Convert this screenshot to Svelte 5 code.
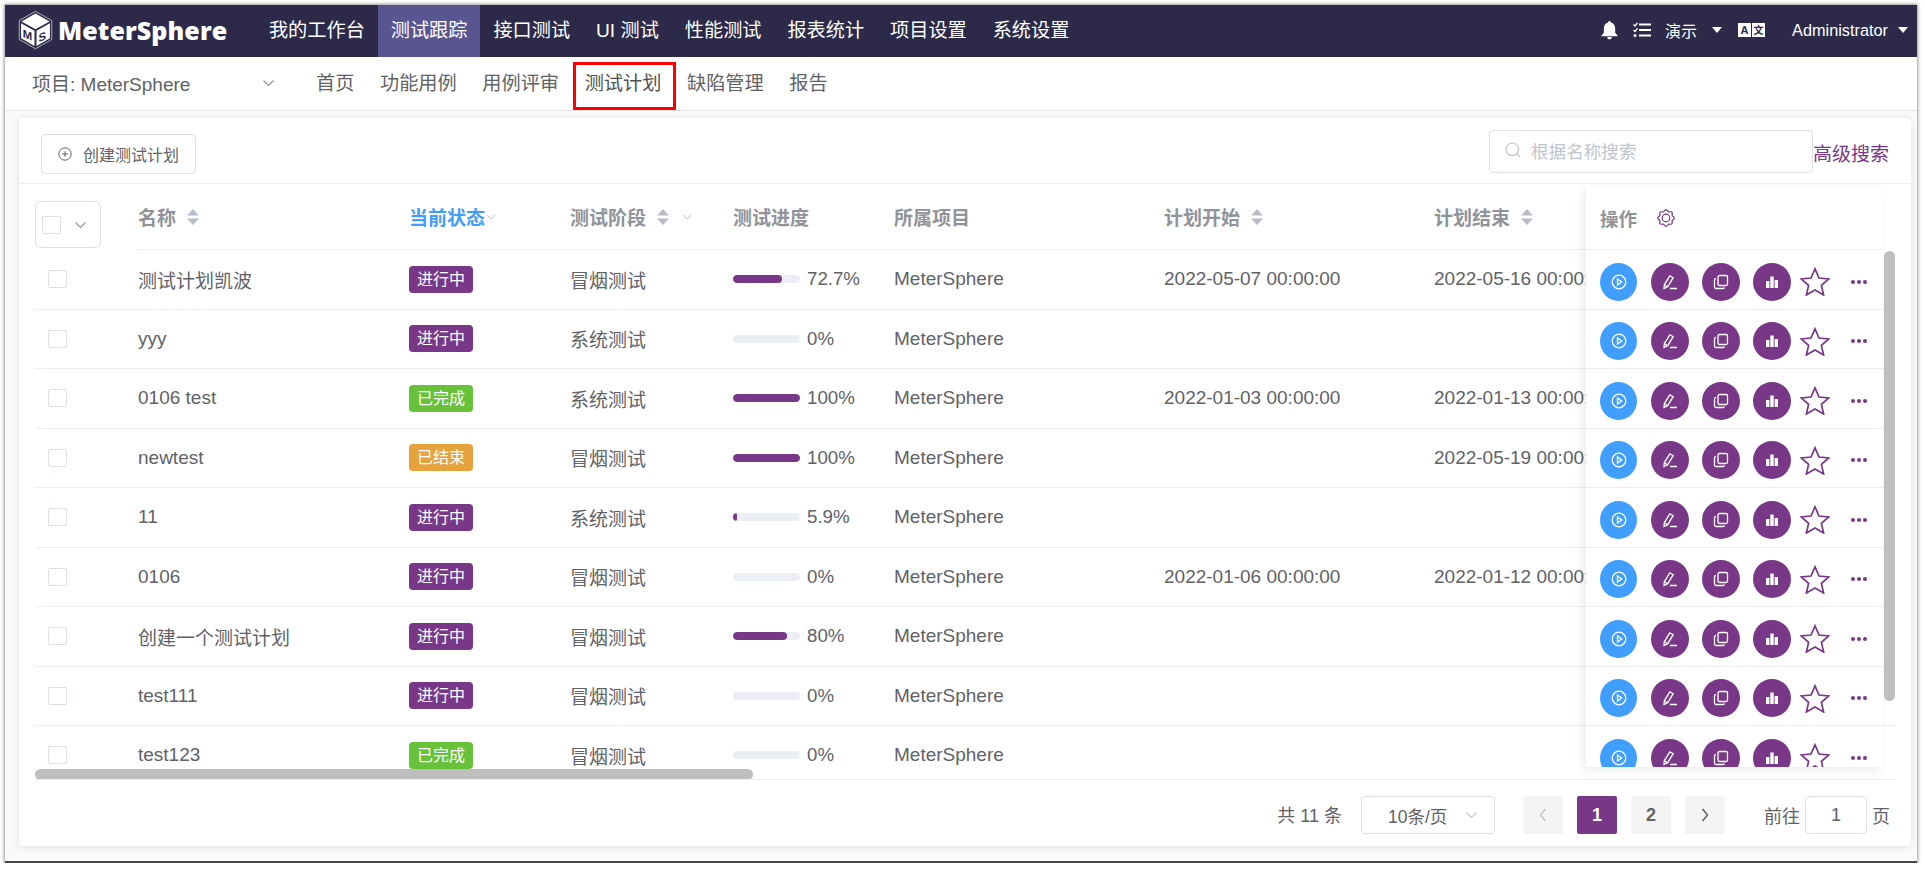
<script lang="ts">
	interface Plan {
		name: string;
		status: string;
		phase: string;
		progress: number;
		start?: string;
		end?: string;
	}

	const topNav = ['我的工作台', '测试跟踪', '接口测试', 'UI 测试', '性能测试', '报表统计', '项目设置', '系统设置'];
	const subNav = ['首页', '功能用例', '用例评审', '测试计划', '缺陷管理', '报告'];

	const plans: Plan[] = [
		{ name: '测试计划凯波', status: '进行中', phase: '冒烟测试', progress: 72.7, start: '2022-05-07 00:00:00', end: '2022-05-16 00:00:00' },
		{ name: 'yyy', status: '进行中', phase: '系统测试', progress: 0 },
		{ name: '0106 test', status: '已完成', phase: '系统测试', progress: 100, start: '2022-01-03 00:00:00', end: '2022-01-13 00:00:00' },
		{ name: 'newtest', status: '已结束', phase: '冒烟测试', progress: 100, end: '2022-05-19 00:00:00' },
		{ name: '11', status: '进行中', phase: '系统测试', progress: 5.9 },
		{ name: '0106', status: '进行中', phase: '冒烟测试', progress: 0, start: '2022-01-06 00:00:00', end: '2022-01-12 00:00:00' },
		{ name: '创建一个测试计划', status: '进行中', phase: '冒烟测试', progress: 80 },
		{ name: 'test111', status: '进行中', phase: '冒烟测试', progress: 0 },
		{ name: 'test123', status: '已完成', phase: '冒烟测试', progress: 0 }
	];

	const statusClass: Record<string, string> = { 进行中: 'doing', 已完成: 'done', 已结束: 'ended' };

	// wavy eight-lobed gear outline
	const gearPath = Array.from({ length: 64 }, (_, i) => {
		const a = (i / 64) * Math.PI * 2;
		const r = 7.5 + 0.8 * Math.cos(8 * a);
		return `${i ? 'L' : 'M'}${(9 + r * Math.sin(a)).toFixed(2)} ${(9 - r * Math.cos(a)).toFixed(2)}`;
	}).join('') + 'Z';
</script>

{#snippet sort()}
	<svg class="sort" viewBox="0 0 14 16"><path d="M7 0l6 6.500H1zM7 16l-6-6.500h12z" /></svg>
{/snippet}

{#snippet chevron(cls)}
	<svg class={cls} viewBox="0 0 12 8"><path d="M1 1.500l5 5 5-5" /></svg>
{/snippet}

<div class="window">
	<header class="top">
		<div class="brand">
			<svg class="logo" viewBox="0 0 34 38">
				<path class="hex" d="M17 .8l15.800 9v18.400L17 37.200 1.200 28.200V9.800z" />
				<path d="M17 3l13.600 7.700L17 18.200 3.400 10.700z" fill="#fff" />
				<path d="M3 12.400l13 7.300v14.800L3 27z" fill="#fff" />
				<path d="M31 12.400l-13 7.300v14.800L31 27z" fill="#fff" />
				<text x="4.500" y="27" transform="skewY(22) translate(0 -3)">M</text>
				<text x="20" y="27" transform="skewY(-22) translate(0 12)">S</text>
			</svg>
			<span class="wordmark">MeterSphere</span>
		</div>
		<nav class="top-nav">
			{#each topNav as item}
				<a class:active={item === '测试跟踪'}>{item}</a>
			{/each}
		</nav>
		<div class="top-right">
			<svg class="bell" viewBox="0 0 18 20"><path d="M9 0a1.500 1.500 0 0 1 1.500 1.600C13.600 2.300 15 5 15 8v4.500l2.500 2.700v.8H.5v-.8L3 12.500V8c0-3 1.400-5.700 4.500-6.400A1.500 1.500 0 0 1 9 0zM6.500 17h5a2.500 2.500 0 0 1-5 0z" /></svg>
			<svg class="tasks" viewBox="0 0 18 16">
				<path d="M6 2.500h12M6 8h12M6 13.500h12" stroke-width="2.200" />
				<path d="M.5 2.500l1.500 1.500L4.500.8M.5 8l1.500 1.500L4.500 6.300" stroke-width="1.300" />
				<circle cx="2" cy="13.500" r="1.500" />
			</svg>
			<span class="demo">演示</span>
			<i class="caret"></i>
			<svg class="lang" viewBox="0 0 27 14">
				<rect width="13" height="14" fill="#fff" />
				<rect x="14" width="13" height="14" fill="#fff" />
				<text x="6.500" y="11" text-anchor="middle">A</text>
				<text x="20.500" y="11" text-anchor="middle" class="zh">文</text>
			</svg>
			<span class="admin">Administrator</span>
			<i class="caret"></i>
		</div>
	</header>

	<div class="sub">
		<div class="project">
			<span>项目: MeterSphere</span>
			{@render chevron('chev project-chev')}
		</div>
		<nav class="sub-nav">
			{#each subNav as item}
				<a class:boxed={item === '测试计划'}>{item}</a>
			{/each}
		</nav>
	</div>

	<main class="content">
		<section class="card">
			<div class="toolbar">
				<button class="create">
					<svg viewBox="0 0 14 14"><circle cx="7" cy="7" r="6.200" /><path d="M7 4.200v5.600M4.200 7h5.600" /></svg>
					创建测试计划
				</button>
				<div class="search-wrap">
					<div class="search">
						<svg viewBox="0 0 16 16"><circle cx="7.300" cy="7.300" r="6.300" /><path d="M12 12l3 3" /></svg>
						<span>根据名称搜索</span>
					</div>
					<a class="advanced">高级搜索</a>
				</div>
			</div>

			<div class="table">
				<div class="row head">
					<div class="cell select-head">
						<div class="select-box">
							<i class="check"></i>
							{@render chevron('chev')}
						</div>
					</div>
					<div class="cell">名称 {@render sort()}</div>
					<div class="cell blue">当前状态{@render chevron('chev tight')}</div>
					<div class="cell">测试阶段 {@render sort()} {@render chevron('chev spaced')}</div>
					<div class="cell">测试进度</div>
					<div class="cell">所属项目</div>
					<div class="cell">计划开始 {@render sort()}</div>
					<div class="cell">计划结束 {@render sort()}</div>
				</div>
				{#each plans as plan}
					<div class="row">
						<div class="cell"><i class="check row-check"></i></div>
						<div class="cell">{plan.name}</div>
						<div class="cell"><span class="tag {statusClass[plan.status]}">{plan.status}</span></div>
						<div class="cell">{plan.phase}</div>
						<div class="cell">
							<div class="bar"><div class="fill" style="width:{plan.progress}%"></div></div>
							<span class="pct">{plan.progress}%</span>
						</div>
						<div class="cell">MeterSphere</div>
						<div class="cell">{plan.start ?? ''}</div>
						<div class="cell">{plan.end ?? ''}</div>
					</div>
				{/each}

				<div class="fixed">
					<div class="fixed-head">
						<span>操作</span>
						<svg class="gear" viewBox="0 0 18 18">
							<path d={gearPath} />
							<circle cx="9" cy="9" r="3.800" />
						</svg>
					</div>
					{#each plans as plan}
						<div class="actions">
							<span class="round run">
								<svg viewBox="0 0 16 16"><circle cx="8" cy="8" r="6.800" /><path d="M6.500 5l4.200 3-4.200 3z" /></svg>
							</span>
							<span class="round">
								<svg viewBox="0 0 16 16"><path d="M2 14.500l.3-3.700L7.800 1.800l3.400 1.900-5.500 9zM2.300 10.800l3.400 1.900M8 14.500h7" /></svg>
							</span>
							<span class="round">
								<svg viewBox="0 0 16 16"><rect x="5" y="1.500" width="9.500" height="10" rx="1.500" /><path d="M3 4.500h-.2A1.500 1.500 0 0 0 1.500 6v7a1.500 1.500 0 0 0 1.500 1.500h7A1.500 1.500 0 0 0 11.500 13.500" /></svg>
							</span>
							<span class="round">
								<svg viewBox="0 0 16 16" class="solid"><rect x="2" y="7" width="3.400" height="7" /><rect x="6.300" y="2.500" width="3.400" height="11.500" /><rect x="10.600" y="6" width="3.400" height="8" /></svg>
							</span>
							<svg class="star" viewBox="0 0 30 29"><path d="M15 1.800l4 9.200 9.800.9-7.400 6.500 2.200 9.600L15 23l-8.600 5 2.200-9.600L1.200 11.900l9.800-.9z" /></svg>
							<span class="dots"><i></i><i></i><i></i></span>
						</div>
					{/each}
				</div>
				<div class="scroll-x"></div>
				<div class="scroll-y"></div>
			</div>

			<footer class="pager">
				<span class="total">共 11 条</span>
				<div class="size">10条/页 {@render chevron('chev size-chev')}</div>
				<div class="pages">
					<span class="page off"><svg viewBox="0 0 8 14"><path d="M6.500 1L1.500 7l5 6" /></svg></span>
					<span class="page current">1</span>
					<span class="page">2</span>
					<span class="page"><svg viewBox="0 0 8 14"><path d="M1.500 1l5 6-5 6" /></svg></span>
				</div>
				<div class="jump">前往 <span class="jump-input">1</span> 页</div>
			</footer>
		</section>
	</main>
</div>

<style>
	:global(body) {
		margin: 0;
		background: #fff;
		font-family: 'Liberation Sans', 'Noto Sans CJK SC', sans-serif;
		color: #606266;
	}

	.window {
		box-sizing: border-box;
		width: 1912px;
		height: 858px;
		margin: 5px 0 0 5px;
		display: flex;
		flex-direction: column;
		background: #fafafa;
		border-bottom: 2px solid #454545;
		box-shadow: 0 0 3px 1px #999;
	}

	/* top bar */
	.top {
		height: 52px;
		flex: none;
		display: flex;
		align-items: stretch;
		background: #2c2a48;
		color: #fff;
	}

	.brand {
		width: 251px;
		display: flex;
		align-items: center;
		padding-left: 13px;
		padding-bottom: 3px;
		box-sizing: border-box;
		flex: none;
	}

	.logo {
		width: 35px;
		height: 40px;
		flex: none;
	}

	.logo .hex {
		fill: none;
		stroke: #fff;
		stroke-width: 0.6;
	}

	.logo text {
		font: 900 11px 'Liberation Sans', sans-serif;
		fill: #2c2a48;
	}

	.wordmark {
		margin-left: 5px;
		font: 800 25px 'Open Sans', sans-serif;
		letter-spacing: 0.1px;
		white-space: nowrap;
	}

	.top-nav {
		display: flex;
		flex: 1;
		align-items: stretch;
	}

	.top-nav a {
		display: flex;
		align-items: center;
		padding: 0 12.950px 4px;
		font-size: 19.200px;
		white-space: nowrap;
		color: #fff;
	}

	.top-nav a.active {
		background: #595591;
	}

	.top-right {
		display: flex;
		align-items: center;
		padding: 0 9px 2px 0;
	}

	.bell {
		width: 17px;
		height: 19px;
		margin-right: 1px;
		fill: #fff;
	}

	.tasks {
		width: 18px;
		height: 16px;
		margin-left: 14px;
		fill: #fff;
		stroke: #fff;
	}

	.tasks path {
		fill: none;
	}

	.tasks circle {
		stroke: none;
	}

	.demo {
		margin-left: 14px;
		font-size: 16px;
	}

	.caret {
		width: 0;
		height: 0;
		margin-left: 15px;
		border: 5px solid transparent;
		border-top: 6px solid #fff;
		border-bottom: 0;
	}

	.lang {
		width: 27px;
		height: 14px;
		margin-left: 16px;
	}

	.lang text {
		font: 700 11px 'Liberation Sans', sans-serif;
		fill: #2c2a48;
	}

	.lang text.zh {
		font: 700 10px 'Noto Sans CJK SC', sans-serif;
	}

	.admin {
		margin-left: 27px;
		font-size: 16.300px;
	}

	.admin + .caret {
		margin-left: 10px;
	}

	/* sub nav */
	.sub {
		height: 54px;
		flex: none;
		box-sizing: border-box;
		display: flex;
		align-items: center;
		background: #fff;
		border-bottom: 1px solid #e6e6e6;
	}

	.project {
		width: 311px;
		flex: none;
		box-sizing: border-box;
		padding: 0 0 2px 27px;
		display: flex;
		align-items: center;
		font-size: 19px;
		color: #606266;
		white-space: nowrap;
	}

	.chev {
		width: 13px;
		height: 8px;
		flex: none;
		fill: none;
		stroke: #909399;
		stroke-width: 1.100;
	}

	.project-chev {
		margin-left: 72px;
	}

	.sub-nav {
		display: flex;
		gap: 25.600px;
		align-items: center;
		font-size: 19.200px;
		padding-top: 1px;
	}

	.sub-nav a {
		position: relative;
		white-space: nowrap;
		line-height: 28px;
	}

	.sub-nav a.boxed {
		color: #505050;
	}

	.sub-nav a.boxed::after {
		content: '';
		position: absolute;
		left: -12px;
		right: -15px;
		top: -8px;
		bottom: -12px;
		border: 3px solid #f00;
	}

	/* card */
	.content {
		flex: 1;
		min-height: 0;
		padding: 7px 6px 15px 14px;
	}

	.card {
		height: 100%;
		display: flex;
		flex-direction: column;
		background: #fff;
		border-radius: 4px;
		box-shadow: 0 1px 8px rgba(0, 0, 0, 0.1);
	}

	.toolbar {
		height: 66px;
		flex: none;
		box-sizing: border-box;
		display: flex;
		align-items: center;
		justify-content: space-between;
		padding: 7px 22px 0 22px;
		border-bottom: 1px solid #ebeef5;
	}

	.create {
		width: 155px;
		height: 40px;
		display: flex;
		align-items: center;
		justify-content: center;
		gap: 11px;
		padding: 0;
		background: #fff;
		border: 1px solid #dcdfe6;
		border-radius: 4px;
		font: 16px 'Liberation Sans', 'Noto Sans CJK SC', sans-serif;
		color: #606266;
	}

	.create svg {
		width: 14px;
		height: 14px;
		fill: none;
		stroke: #606266;
		stroke-width: 1;
	}

	.search-wrap {
		display: flex;
		align-items: center;
		align-self: flex-start;
		margin-top: 5px;
	}

	.search {
		width: 324px;
		height: 43px;
		box-sizing: border-box;
		display: flex;
		align-items: center;
		gap: 10px;
		padding: 0 0 3px 15px;
		border: 1px solid #dcdfe6;
		border-radius: 4px;
		font-size: 17.600px;
		color: #c0c4cc;
	}

	.search svg {
		width: 16px;
		height: 16px;
		fill: none;
		stroke: #c0c4cc;
		stroke-width: 1.200;
	}

	.advanced {
		margin-top: 1px;
		font-size: 19px;
		color: #783887;
	}

	/* table */
	.table {
		position: relative;
		height: 596px;
		margin: 0 15px 0 16px;
		flex: none;
		overflow: hidden;
		border-bottom: 1px solid #ebeef5;
		box-sizing: border-box;
	}

	.row {
		display: grid;
		grid-template-columns: 103px 271px 161px 163px 161px 270px 270px 271px;
		height: 59.500px;
		box-sizing: border-box;
		border-bottom: 1px solid #ebeef5;
		font-size: 19px;
		white-space: nowrap;
	}

	.row.head {
		height: 66px;
		border-bottom: 0;
		font-weight: 700;
		color: #909399;
	}

	.head .cell {
		border-bottom: 1px solid #ebeef5;
		box-sizing: border-box;
	}

	.head .select-head {
		border-bottom: 0;
		padding: 0;
	}

	.cell {
		display: flex;
		align-items: center;
		min-width: 0;
	}

	.cell.blue {
		color: #409eff;
	}

	.sort {
		width: 14px;
		height: 16px;
		margin-left: 10px;
		fill: #b9bdc7;
		flex: none;
	}

	.tight {
		margin-left: 1px;
		stroke: #b0b3ba;
		stroke-width: 1;
		width: 10px;
	}

	.spaced {
		margin-left: 12px;
		stroke: #b0b3ba;
		stroke-width: 1;
		width: 10px;
	}

	.select-box {
		width: 66px;
		height: 47px;
		box-sizing: border-box;
		margin: 15px 0 0 0;
		display: flex;
		align-items: center;
		gap: 13px;
		padding-left: 6px;
		border: 1px solid #dcdfe6;
		border-radius: 6px;
	}

	.check {
		display: block;
		width: 19px;
		height: 18px;
		box-sizing: border-box;
		border: 1px solid #dcdfe6;
		border-radius: 2px;
		background: #fff;
	}

	.row-check {
		margin-left: 13px;
	}

	.tag {
		display: block;
		width: 64px;
		height: 27px;
		line-height: 27px;
		border-radius: 4px;
		font-size: 16px;
		text-align: center;
		color: #fff;
	}

	.tag.doing {
		background: #783887;
	}

	.tag.done {
		background: #67c23a;
	}

	.tag.ended {
		background: #e6a23c;
	}

	.bar {
		width: 67px;
		height: 8px;
		flex: none;
		border-radius: 4px;
		background: #ebeef5;
		overflow: hidden;
	}

	.fill {
		height: 100%;
		border-radius: 4px;
		background: #783887;
	}

	.pct {
		margin-left: 7px;
		font-size: 18.700px;
	}

	/* pinned operations column */
	.fixed {
		position: absolute;
		left: 1551px;
		top: 3px;
		width: 297px;
		height: 580px;
		background: #fff;
		overflow: hidden;
		box-shadow: -3px 3px 10px rgba(0, 0, 0, 0.08);
	}

	.fixed-head {
		height: 63px;
		box-sizing: border-box;
		display: flex;
		align-items: center;
		gap: 20px;
		padding-left: 14px;
		font-size: 18.500px;
		font-weight: 700;
		color: #909399;
		border-bottom: 1px solid #ebeef5;
	}

	.gear {
		width: 18px;
		height: 18px;
		fill: none;
		stroke: #783887;
		stroke-width: 1.200;
	}

	.actions {
		height: 59.500px;
		box-sizing: border-box;
		display: flex;
		align-items: center;
		padding: 5px 0 0 14px;
		border-bottom: 1px solid #ebeef5;
	}

	.round {
		width: 38px;
		height: 38px;
		flex: none;
		display: flex;
		align-items: center;
		justify-content: center;
		margin-right: 13px;
		border-radius: 50%;
		background: #783887;
	}

	.round.run {
		width: 37px;
		margin-right: 14px;
		background: #409eff;
	}

	.round svg {
		width: 16px;
		height: 16px;
		fill: none;
		stroke: #fff;
		stroke-width: 1.300;
	}

	.round svg.solid {
		fill: #fff;
		stroke: none;
	}

	.star {
		width: 30px;
		height: 29px;
		margin-left: -4px;
		flex: none;
		fill: #fff;
		stroke: #783887;
		stroke-width: 1.700;
	}

	.dots {
		display: flex;
		gap: 2px;
		margin-left: 21px;
	}

	.dots i {
		width: 4px;
		height: 4px;
		border-radius: 50%;
		background: #783887;
	}

	.scroll-x {
		position: absolute;
		left: 0;
		top: 585px;
		width: 718px;
		height: 11px;
		border-radius: 6px;
		background: #bfbfbf;
	}

	.scroll-y {
		position: absolute;
		left: 1849px;
		top: 67px;
		width: 11px;
		height: 450px;
		border-radius: 6px;
		background: #bfbfbf;
	}

	/* pagination */
	.pager {
		flex: 1;
		display: flex;
		align-items: center;
		justify-content: flex-end;
		padding: 4px 21px 0 0;
		font-size: 18px;
		white-space: nowrap;
	}

	.total {
		margin-bottom: 3px;
	}

	.size {
		width: 134px;
		height: 38px;
		box-sizing: border-box;
		margin-left: 19px;
		display: flex;
		align-items: center;
		padding-left: 26px;
		border: 1px solid #dcdfe6;
		border-radius: 4px;
		font-size: 17.500px;
	}

	.size-chev {
		margin-left: 18px;
		stroke: #c0c4cc;
	}

	.pages {
		display: flex;
		gap: 14px;
		margin-left: 28px;
	}

	.page {
		width: 40px;
		height: 38px;
		display: flex;
		align-items: center;
		justify-content: center;
		border-radius: 2px;
		background: #f4f4f5;
		font-weight: 700;
		font-size: 18px;
	}

	.page.current {
		background: #783887;
		color: #fff;
	}

	.page svg {
		width: 8px;
		height: 14px;
		fill: none;
		stroke: #606266;
		stroke-width: 1.500;
	}

	.page.off svg {
		stroke: #c0c4cc;
	}

	.jump {
		display: flex;
		align-items: center;
		gap: 5px;
		margin-left: 39px;
	}

	.jump-input {
		width: 62px;
		height: 38px;
		box-sizing: border-box;
		display: flex;
		align-items: center;
		justify-content: center;
		border: 1px solid #dcdfe6;
		border-radius: 4px;
	}
</style>
